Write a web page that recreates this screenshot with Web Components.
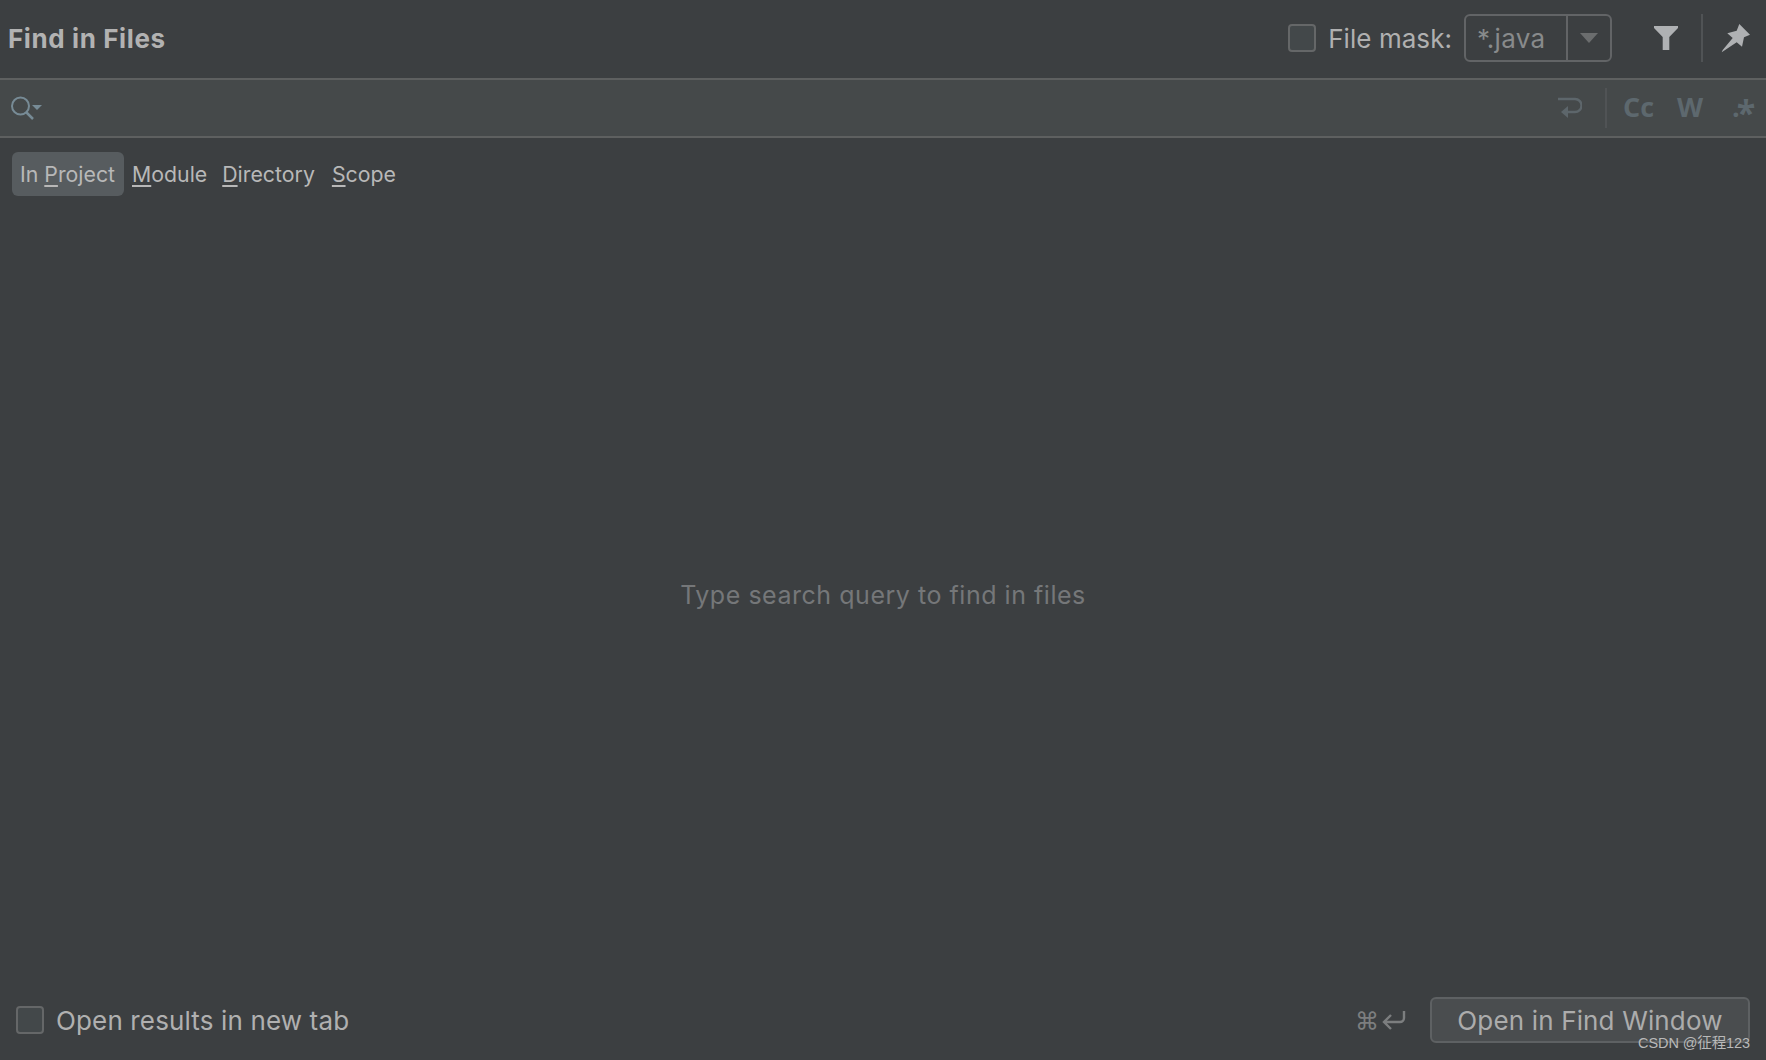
<!DOCTYPE html>
<html><head><meta charset="utf-8">
<style>
html,body{margin:0;height:100%;background:#3c3f41}
body{font-family:Inter,"Noto Sans CJK SC",sans-serif;color:#b4b4b4}
find-dialog{height:1060px}
</style></head><body>
<find-dialog></find-dialog>
<template id="t-check"><style>
:host{display:inline-flex;align-items:center;gap:12px;font-size:26px;color:#b0b0b0;letter-spacing:.14px}
.b{width:24px;height:24px;border:2px solid #656768;border-radius:4px;background:#43484a;flex:none}
</style><span class="b"></span><span><slot></slot></span></template>

<template id="t-tab"><style>
:host{display:flex;align-items:center;height:44px;padding:0 8px;border-radius:6px;font-size:21.3px;color:#b8b8b8;white-space:nowrap}
:host([active]){background:#575c5f;padding:0 8px;width:96px}
::slotted(u){text-underline-offset:3px}
</style><span><slot></slot></span></template>

<template id="t-mask"><style>
:host{display:flex;width:148px;height:48px;box-sizing:border-box;border:2px solid #626466;border-radius:6px;font-size:26px;color:#888a8b}
.v{width:102px;box-sizing:border-box;padding-left:11px;display:flex;align-items:center;letter-spacing:.3px;border-right:2px solid #626466}
.a{flex:1;display:flex;align-items:center;justify-content:center}
</style><span class="v"><slot></slot></span><span class="a"><svg width="18" height="10" viewBox="0 0 18 10"><path d="M0 0h18L9 10z" fill="#6b6d6e"/></svg></span></template>

<template id="t-dialog"><style>
:host{display:flex;flex-direction:column;width:1766px;overflow:hidden;position:relative;background:#3c3f41}
header{height:78px;box-sizing:border-box;display:flex;align-items:center;padding:0 16px 2px 8px}
h1{margin:0;font-size:26px;font-weight:700;color:#b2b2b2;letter-spacing:.6px;margin-right:auto}
.mask-label{margin-right:12px;letter-spacing:.05px}
.f{margin-left:42px;width:24px;height:24px;display:block}
.sep{width:2px;height:48px;background:#505355;margin:0 18px 0 23px}
.search{height:56px;display:flex;align-items:center;background:#45494a;border-top:2px solid #5e6060;border-bottom:2px solid #5e6060;padding:0 14px 0 10px}
.search .grow{flex:1}
.wrap{margin-top:2px}
.tg{font-family:"Open Sans",sans-serif;font-weight:700;font-size:27px;color:#5d686e;line-height:1;white-space:nowrap;padding-bottom:4px}
.cc{width:31px;margin-right:23px}
.w{width:26px;margin-right:29px}
.re{width:20px}
.star{font-size:34px;position:relative;top:8px;line-height:0;margin-left:-3px}
.vs{width:2px;height:40px;background:#505355;margin:0 16px 0 23px}
nav{display:flex;align-items:center;gap:0;padding:14px 12px 0}
main{flex:1;display:flex;align-items:center;justify-content:center;font-size:25px;color:#757779;letter-spacing:.53px;padding-top:12px}
footer{height:78px;box-sizing:border-box;display:flex;align-items:center;padding:0 16px 2px 16px;}
.sc{margin-left:auto;margin-right:24px;display:flex;align-items:center;gap:3px;color:#7c7e7f;font-size:24px}
.btn{display:flex;align-items:center;justify-content:center;width:320px;height:46px;box-sizing:border-box;border:2px solid #5e6163;border-radius:6px;background:#4a4d4f;font-size:26px;color:#acacac;letter-spacing:.15px}
.wm{position:absolute;right:16px;bottom:8px;font:14.5px "Liberation Sans","Noto Sans CJK SC",sans-serif;color:#b9b9b9;letter-spacing:-.1px}
</style>
<header>
<h1>Find in Files</h1>
<x-check class="mask-label">File mask:</x-check>
<x-mask>*.java</x-mask>
<svg class="f" viewBox="0 0 24 24"><path d="M0 0h24v2l-8.700 9v13H8.700V11L0 2z" fill="#afb1b3"/></svg>
<span class="sep"></span>
<svg width="29" height="29" viewBox="0 0 29 29"><path d="M18.300 0L29 10.700 23 13.300 21 22.700 15.700 18.300 .7 28.300 1.700 26 11.700 14 6.300 9.300 15.700 6.700z" fill="#afb1b3"/></svg>
</header>
<div class="search">
<svg width="34" height="26" viewBox="0 0 34 26"><circle cx="10.500" cy="11" r="8.500" fill="none" stroke="#778b96" stroke-width="2"/><path d="M16 17l7 7" stroke="#778b96" stroke-width="2.500"/><path d="M22 10h10l-5 5z" fill="#778b96"/></svg>
<span class="grow"></span>
<svg class="wrap" width="24" height="24" viewBox="0 0 24 24"><path d="M0 2h17a6.500 6.500 0 0 1 0 13H8" fill="none" stroke="#5d666b" stroke-width="2.400"/><path d="M10 9L3 15l7 6z" fill="#5d666b"/></svg>
<span class="vs"></span>
<span class="tg cc">Cc</span>
<span class="tg w">W</span>
<span class="tg re">.<span class="star">*</span></span>
</div>
<nav>
<x-tab active>In <u>P</u>roject</x-tab>
<x-tab><u>M</u>odule</x-tab>
<x-tab style="margin-left:-1px"><u>D</u>irectory</x-tab>
<x-tab style="margin-left:1px"><u>S</u>cope</x-tab>
</nav>
<main>Type search query to find in files</main>
<footer>
<x-check>Open results in new tab</x-check>
<span class="sc">⌘<svg width="24" height="20" viewBox="0 0 24 20"><path d="M22 1v7a4 4 0 0 1-4 4H3M9 5l-7 7 7 7" fill="none" stroke="#7c7e7f" stroke-width="2.400"/></svg></span>
<span class="btn">Open in Find Window</span>
</footer>
<span class="wm">CSDN @征程123</span>
</template>
<script>
function def(name,tid){customElements.define(name,class extends HTMLElement{constructor(){super();this.attachShadow({mode:"open"}).appendChild(document.getElementById(tid).content.cloneNode(true));}});}
def("x-check","t-check");def("x-tab","t-tab");def("x-mask","t-mask");def("find-dialog","t-dialog");
</script>
</body></html>
